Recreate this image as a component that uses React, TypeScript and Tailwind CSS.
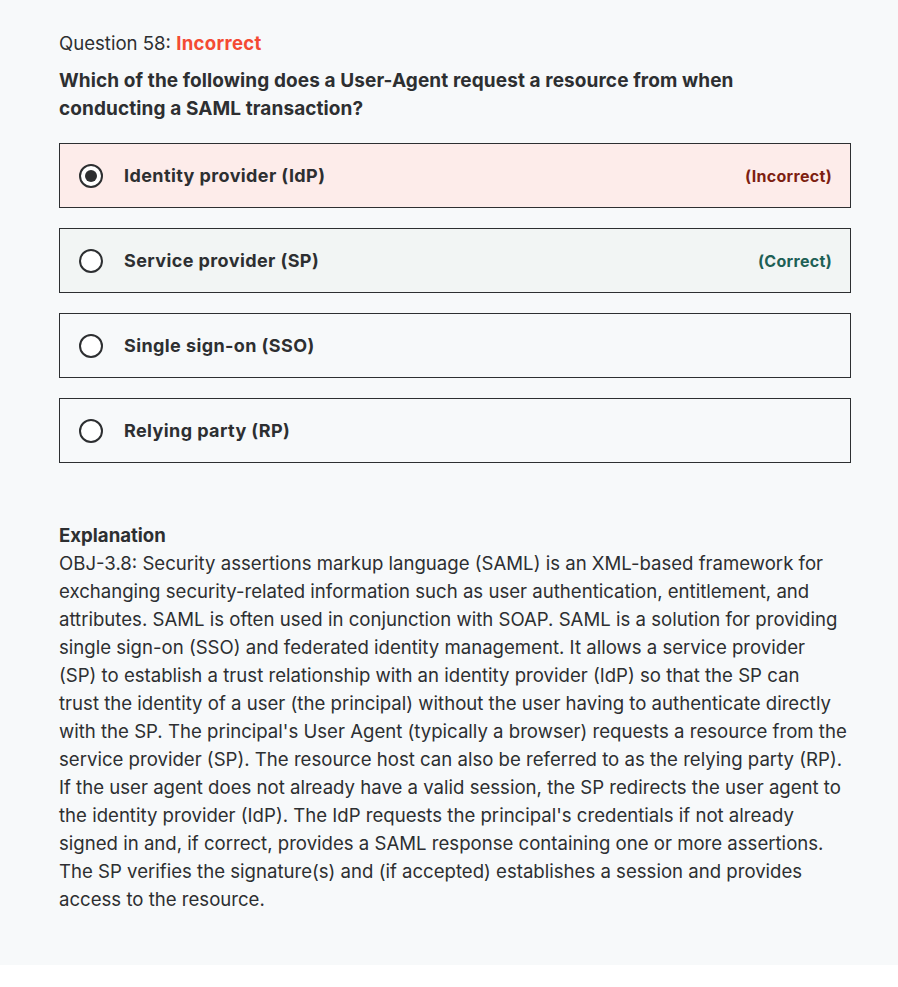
import React from 'react';

interface Option {
  label: string;
  selected?: boolean;
  status?: 'incorrect' | 'correct';
}

const options: Option[] = [
  { label: 'Identity provider (IdP)', selected: true, status: 'incorrect' },
  { label: 'Service provider (SP)', status: 'correct' },
  { label: 'Single sign-on (SSO)' },
  { label: 'Relying party (RP)' },
];

// lines kept as in the source so wrapping matches
const explanation = [
  'OBJ-3.8: Security assertions markup language (SAML) is an XML-based framework for',
  'exchanging security-related information such as user authentication, entitlement, and',
  'attributes. SAML is often used in conjunction with SOAP. SAML is a solution for providing',
  'single sign-on (SSO) and federated identity management. It allows a service provider',
  '(SP) to establish a trust relationship with an identity provider (IdP) so that the SP can',
  'trust the identity of a user (the principal) without the user having to authenticate directly',
  "with the SP. The principal's User Agent (typically a browser) requests a resource from the",
  'service provider (SP). The resource host can also be referred to as the relying party (RP).',
  'If the user agent does not already have a valid session, the SP redirects the user agent to',
  "the identity provider (IdP). The IdP requests the principal's credentials if not already",
  'signed in and, if correct, provides a SAML response containing one or more assertions.',
  'The SP verifies the signature(s) and (if accepted) establishes a session and provides',
  'access to the resource.',
];

function Radio({ checked }: { checked?: boolean }) {
  return (
    <span className="flex h-6 w-6 shrink-0 items-center justify-center rounded-full border-2 border-[#2d2f31] bg-white">
      {checked && <span className="h-3 w-3 rounded-full bg-[#2d2f31]" />}
    </span>
  );
}

function AnswerRow({ option }: { option: Option }) {
  const bg =
    option.status === 'incorrect'
      ? 'bg-[#fdecea]'
      : option.status === 'correct'
        ? 'bg-[#f2f5f4]'
        : 'bg-[#f7f9fa]';

  return (
    <div className={`flex h-[65px] items-center border border-[#2d2f31] pl-[19px] pr-[18px] ${bg}`}>
      <Radio checked={option.selected} />
      <span className="ml-[21px] flex-1 text-[18px] font-bold tracking-[0.4px] text-[#2d2f31]">
        {option.label}
      </span>
      {option.status === 'incorrect' && (
        <span className="text-[16px] font-bold tracking-[0.3px] text-[#7d1f12]">(Incorrect)</span>
      )}
      {option.status === 'correct' && (
        <span className="text-[16px] font-bold tracking-[0.3px] text-[#1e6055]">(Correct)</span>
      )}
    </div>
  );
}

export default function App() {
  return (
    <div
      className="bg-[#f7f9fa] px-[59px] pb-[52px] pt-[29px] text-[#2d2f31]"
      style={{ fontFamily: 'Inter, "Noto Sans", sans-serif' }}
    >
      <div className="w-[792px]">
        <p className="text-[18.6px] leading-[28px]">
          Question 58: <span className="font-bold tracking-[0.3px] text-[#f44a33]">Incorrect</span>
        </p>
        <p className="mt-[10px] text-[19px] font-bold leading-[28px] tracking-[0.1px]">
          Which of the following does a User-Agent request a resource from when
          <br />
          conducting a SAML transaction?
        </p>

        <div className="mt-[20px] flex flex-col gap-[20px]">
          {options.map((o) => (
            <AnswerRow key={o.label} option={o} />
          ))}
        </div>

        <div className="mt-[58px] text-[18.6px] leading-[28px]">
          <p className="font-bold">Explanation</p>
          {explanation.map((line) => (
            <p key={line} className="whitespace-nowrap">
              {line}
            </p>
          ))}
        </div>
      </div>
    </div>
  );
}
